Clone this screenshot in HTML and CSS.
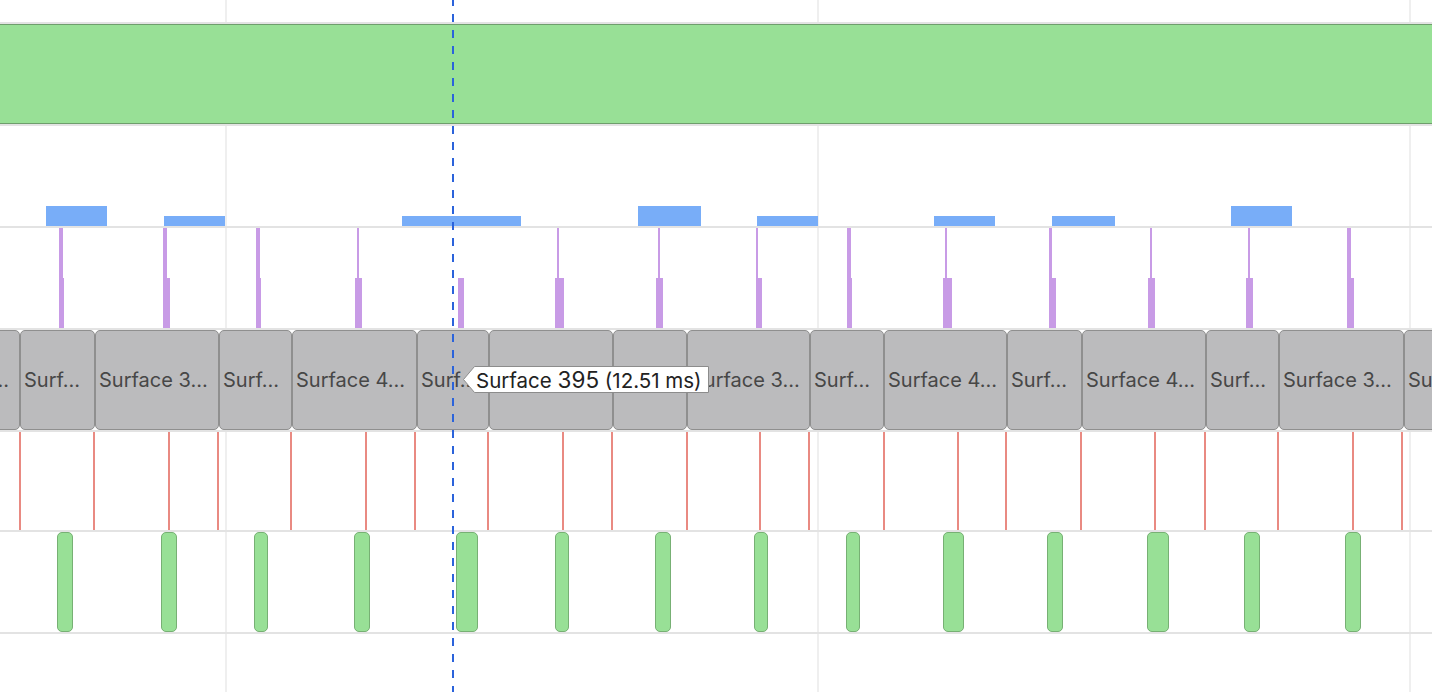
FILE: index.html
```html
<!DOCTYPE html>
<html lang="en">
<head>
<meta charset="utf-8">
<title>Timeline</title>
<link rel="stylesheet" href="styles.css">
</head>
<body>
<div class="timeline">
  <div class="row row-top"></div>

  <div class="row row-frame"><div class="frame-bar"></div></div>

  <div class="row row-blue">
    <div class="bbar tall" style="left:46px;width:61px"></div>
    <div class="bbar" style="left:164px;width:61px"></div>
    <div class="bbar" style="left:402px;width:119px"></div>
    <div class="bbar tall" style="left:638px;width:63px"></div>
    <div class="bbar" style="left:757px;width:61px"></div>
    <div class="bbar" style="left:934px;width:61px"></div>
    <div class="bbar" style="left:1052px;width:63px"></div>
    <div class="bbar tall" style="left:1231px;width:61px"></div>
  </div>

  <div class="row row-purple">
    <div class="tick-top" style="left:59px;width:4px"></div><div class="tick-bot" style="left:59px;width:5px"></div>
    <div class="tick-top" style="left:163px;width:4px"></div><div class="tick-bot" style="left:163px;width:7px"></div>
    <div class="tick-top" style="left:256px;width:4px"></div><div class="tick-bot" style="left:256px;width:5px"></div>
    <div class="tick-top" style="left:357px;width:2px"></div><div class="tick-bot" style="left:355px;width:7px"></div>
    <div class="tick-bot" style="left:458px;width:6px"></div>
    <div class="tick-top" style="left:557px;width:2px"></div><div class="tick-bot" style="left:555px;width:9px"></div>
    <div class="tick-top" style="left:658px;width:2px"></div><div class="tick-bot" style="left:656px;width:7px"></div>
    <div class="tick-top" style="left:756px;width:2px"></div><div class="tick-bot" style="left:756px;width:6px"></div>
    <div class="tick-top" style="left:847px;width:4px"></div><div class="tick-bot" style="left:847px;width:5px"></div>
    <div class="tick-top" style="left:945px;width:2px"></div><div class="tick-bot" style="left:943px;width:9px"></div>
    <div class="tick-top" style="left:1049px;width:3px"></div><div class="tick-bot" style="left:1049px;width:7px"></div>
    <div class="tick-top" style="left:1150px;width:2px"></div><div class="tick-bot" style="left:1148px;width:7px"></div>
    <div class="tick-top" style="left:1248px;width:2px"></div><div class="tick-bot" style="left:1246px;width:7px"></div>
    <div class="tick-top" style="left:1347px;width:4px"></div><div class="tick-bot" style="left:1347px;width:7px"></div>
  </div>

  <div class="row row-surface">
    <div class="surface lead" style="width:124px">Surface 4…</div>
    <div class="surface" style="width:75px">Surf…</div>
    <div class="surface" style="width:124px">Surface 3…</div>
    <div class="surface" style="width:73px">Surf…</div>
    <div class="surface" style="width:125px">Surface 4…</div>
    <div class="surface" style="width:72px">Surf…</div>
    <div class="surface" style="width:124px">Surface 3…</div>
    <div class="surface" style="width:74px">Surf…</div>
    <div class="surface" style="width:123px">Surface 3…</div>
    <div class="surface" style="width:74px">Surf…</div>
    <div class="surface" style="width:123px">Surface 4…</div>
    <div class="surface" style="width:75px">Surf…</div>
    <div class="surface" style="width:124px">Surface 4…</div>
    <div class="surface" style="width:73px">Surf…</div>
    <div class="surface" style="width:125px">Surface 3…</div>
    <div class="surface" style="width:74px">Surf…</div>
  </div>

  <div class="row row-red">
    <div class="rline" style="left:19px"></div>
    <div class="rline" style="left:93px"></div>
    <div class="rline" style="left:168px"></div>
    <div class="rline" style="left:217px"></div>
    <div class="rline" style="left:290px"></div>
    <div class="rline" style="left:365px"></div>
    <div class="rline" style="left:414px"></div>
    <div class="rline" style="left:487px"></div>
    <div class="rline" style="left:562px"></div>
    <div class="rline" style="left:611px"></div>
    <div class="rline" style="left:686px"></div>
    <div class="rline" style="left:759px"></div>
    <div class="rline" style="left:808px"></div>
    <div class="rline" style="left:883px"></div>
    <div class="rline" style="left:957px"></div>
    <div class="rline" style="left:1005px"></div>
    <div class="rline" style="left:1080px"></div>
    <div class="rline" style="left:1154px"></div>
    <div class="rline" style="left:1204px"></div>
    <div class="rline" style="left:1277px"></div>
    <div class="rline" style="left:1352px"></div>
    <div class="rline" style="left:1401px"></div>
  </div>

  <div class="row row-pills">
    <div class="pill" style="left:57px;width:16px"></div>
    <div class="pill" style="left:161px;width:16px"></div>
    <div class="pill" style="left:254px;width:14px"></div>
    <div class="pill" style="left:354px;width:16px"></div>
    <div class="pill" style="left:456px;width:22px"></div>
    <div class="pill" style="left:555px;width:14px"></div>
    <div class="pill" style="left:655px;width:16px"></div>
    <div class="pill" style="left:754px;width:14px"></div>
    <div class="pill" style="left:846px;width:14px"></div>
    <div class="pill" style="left:943px;width:21px"></div>
    <div class="pill" style="left:1047px;width:16px"></div>
    <div class="pill" style="left:1147px;width:22px"></div>
    <div class="pill" style="left:1244px;width:16px"></div>
    <div class="pill" style="left:1345px;width:16px"></div>
  </div>

  <div class="row row-empty"></div>

  <div class="cursor"></div>

  <div class="tooltip">
    <svg class="tooltip-shape" width="246" height="27" viewBox="0 0 246 27">
      <polygon points="0.5,13.5 11.5,0.5 245.5,0.5 245.5,26.5 11.5,26.5" fill="#ffffff" stroke="#8c8c8c" stroke-width="1"/>
    </svg>
    <span class="tooltip-text">Surface <span class="num">395</span> (12.51 ms)</span>
  </div>
</div>
</body>
</html>
```

FILE: styles.css
```css
* { box-sizing: border-box; }

html, body {
  margin: 0;
  padding: 0;
  background: #ffffff;
}

.timeline {
  position: relative;
  width: 1432px;
  height: 692px;
  overflow: hidden;
  display: flex;
  flex-direction: column;
  background-color: #ffffff;
  background-image: repeating-linear-gradient(to right,
    transparent 0 225px,
    #efefef 225px 227px,
    transparent 227px 592px);
  font-family: Inter, "Liberation Sans", sans-serif;
}

.row {
  position: relative;
  flex: none;
  height: 102px;
  border-top: 2px solid #e3e3e3;
}

.row-top {
  height: 22px;
  border-top: none;
}

.row-red { height: 100px; }

.row-empty {
  flex: 1;
  height: auto;
}

.frame-bar {
  height: 100px;
  margin: 0 -4px;
  background: #98e096;
  border-top: 1px solid #6e9e6c;
  border-bottom: 1px solid #6e9e6c;
}

.bbar {
  position: absolute;
  bottom: 0;
  height: 10px;
  background: #78adf8;
}

.bbar.tall { height: 20px; }

.tick-top,
.tick-bot {
  position: absolute;
  height: 50px;
  background: #c89be6;
}

.tick-top { top: 0; }
.tick-bot { top: 50px; }

.row-surface {
  display: flex;
}

.surface {
  flex: none;
  height: 100px;
  display: flex;
  align-items: center;
  padding: 0 3px;
  border: 1px solid #8f8f8f;
  border-radius: 5px;
  background: #bbbbbd;
  color: #474747;
  font-size: 20px;
  white-space: nowrap;
  overflow: hidden;
}

.surface.lead { margin-left: -104px; }

.rline {
  position: absolute;
  top: 0;
  bottom: 0;
  width: 2px;
  background: #e98a82;
}

.pill {
  position: absolute;
  top: 0;
  bottom: 0;
  background: #98e096;
  border: 1px solid #77b074;
  border-radius: 5px;
}

.cursor {
  position: absolute;
  left: 452px;
  top: 0;
  bottom: 0;
  width: 2px;
  background: repeating-linear-gradient(to bottom,
    #2b63db 0 6px,
    transparent 6px 14px,
    #2b63db 14px 16px);
}

.tooltip {
  position: absolute;
  left: 463px;
  top: 366px;
  width: 246px;
  height: 27px;
  display: flex;
  align-items: center;
  padding-left: 13px;
}

.tooltip-shape {
  position: absolute;
  left: 0;
  top: 0;
}

.tooltip-text {
  position: relative;
  font-size: 20.5px;
  color: #222222;
  white-space: nowrap;
}

.tooltip-text .num {
  font-size: 22.5px;
}
```
